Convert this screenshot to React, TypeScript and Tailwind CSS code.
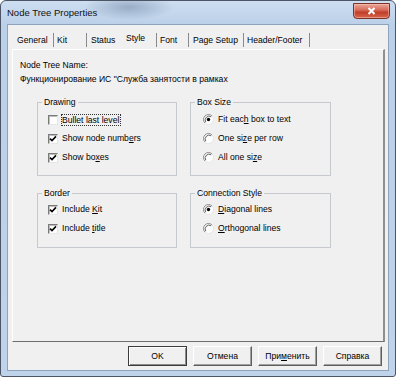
import React from "react";

function Check({ checked }: { checked: boolean }) {
  return (
    <span className="w-[10px] h-[10px] shrink-0 bg-white border border-t-[#7a7a7a] border-l-[#7a7a7a] border-b-[#e6e6e6] border-r-[#e6e6e6] shadow-[inset_1px_1px_0_#bdbdbd] flex items-center justify-center">
      {checked && (
        <svg width="8" height="8" viewBox="0 0 8 8">
          <path d="M1 3.6 L3 5.6 L7 1.4" stroke="#000" strokeWidth="1.6" fill="none" />
        </svg>
      )}
    </span>
  );
}

function Radio({ checked }: { checked: boolean }) {
  return (
    <svg width="11" height="11" viewBox="0 0 11 11" className="shrink-0">
      <circle cx="5.5" cy="5.5" r="5" fill="#fff" />
      <path d="M1.96 9.04 A5 5 0 0 1 9.04 1.96" stroke="#8a8a8a" fill="none" />
      <path d="M9.04 1.96 A5 5 0 0 1 1.96 9.04" stroke="#e4e4e4" fill="none" />
      <path d="M2.8 8.2 A3.9 3.9 0 0 1 8.2 2.8" stroke="#3a3a3a" strokeWidth="0.8" fill="none" />
      {checked && <circle cx="5.5" cy="5.5" r="1.7" fill="#000" />}
    </svg>
  );
}

function Tab({
  label,
  w,
  pl,
  sep = true,
  selected = false,
}: {
  label: string;
  w: string;
  pl: string;
  sep?: boolean;
  selected?: boolean;
}) {
  return (
    <div className={`flex items-start ${w}`}>
      <span className={`${pl} ${selected ? "pt-[7px]" : "pt-[9px]"} leading-[12px] whitespace-nowrap`}>{label}</span>
      {sep && <span className="ml-auto mt-[8px] w-px h-[14px] bg-[#8a8a8a] shrink-0" />}
    </div>
  );
}

export default function App() {
  return (
    <div className="w-[396px] h-[377px] overflow-hidden font-['Liberation_Sans',Arial,sans-serif] text-[8.6px] text-black">
      <div className="w-full h-full rounded-t-[6px] rounded-b-[3px] border border-[#4b5566] bg-[radial-gradient(ellipse_45px_13px_at_128px_6px,rgba(95,118,150,0.45),transparent),linear-gradient(180deg,#cddef0_0px,#bbd0e9_24px,#bfd3ea_100%)] flex flex-col">
        {/* title bar */}
        <div className="h-[23px] flex items-start shrink-0">
          <span className="ml-[6px] pt-[6px] text-[9.5px] leading-[12px] text-[#111]">Node Tree Properties</span>
          <div className="ml-auto mr-[5px] mt-[2px] w-[37px] h-[16px] rounded-b-[4px] border border-[#7b3328] bg-[linear-gradient(180deg,#e8a898_0%,#d9705f_40%,#c23f2a_60%,#d5674d_100%)] flex items-center justify-center shadow-[inset_0_0_0_1px_rgba(255,200,190,0.5)]">
            <svg width="9" height="8" viewBox="0 0 9 8">
              <path d="M1.5 1 L7.5 7 M7.5 1 L1.5 7" stroke="#fff" strokeWidth="2" />
            </svg>
          </div>
        </div>
        {/* client */}
        <div className="mx-[6px] mb-[5px] flex-1 bg-[#f0f0f0] border border-[#8ea3bd] flex flex-col">
          {/* tabs */}
          <div className="h-[24px] pl-[4px] flex shrink-0">
            <Tab label="General" w="w-[42px]" pl="pl-[5px]" />
            <Tab label="Kit" w="w-[33px]" pl="pl-[3px]" />
            <Tab label="Status" w="w-[33px]" pl="pl-[4px]" sep={false} />
            <Tab label="Style" w="w-[37px]" pl="pl-[6px]" selected />
            <Tab label="Font" w="w-[32px]" pl="pl-[3px]" />
            <Tab label="Page Setup" w="w-[55px]" pl="pl-[4px]" />
            <Tab label="Header/Footer" w="w-[66px]" pl="pl-[3px]" />
          </div>
          {/* panel */}
          <div className="ml-[4px] mr-[3px] h-[293px] shrink-0 border-t border-l border-t-white border-l-white border-r-2 border-r-[#8f8f8f] border-b border-b-[#6d6d6d] px-[7px] pt-[9px]">
            <div className="leading-[12px]">Node Tree Name:</div>
            <div className="leading-[12px] mt-[2px]">Функционирование ИС "Служба занятости в рамках</div>
            <div className="grid grid-cols-[140px_141px] gap-x-[13px] gap-y-[11px] ml-[17px] mt-[11px]">
              <fieldset className="h-[80px] border border-[#c6c9cd] p-0 m-0 min-w-0">
                <legend className="ml-[4px] px-[2px] leading-[12px]">Drawing</legend>
                <div className="pl-[10px] pt-[2px]">
                  <div className="h-[19px] flex items-center">
                    <Check checked={false} />
                    <span className="ml-[3px] border border-dotted border-[#333] leading-[10px] pr-[1px]">Bullet last level</span>
                  </div>
                  <div className="h-[19px] flex items-center">
                    <Check checked />
                    <span className="ml-[4px]">Show node numb<u>e</u>rs</span>
                  </div>
                  <div className="h-[19px] flex items-center">
                    <Check checked />
                    <span className="ml-[4px]">Show bo<u>x</u>es</span>
                  </div>
                </div>
              </fieldset>
              <fieldset className="h-[80px] border border-[#c6c9cd] p-0 m-0 min-w-0">
                <legend className="ml-[4px] px-[2px] leading-[12px]">Box Size</legend>
                <div className="pl-[12px] pt-[2px]">
                  <div className="h-[19px] flex items-center">
                    <Radio checked />
                    <span className="ml-[4px]">Fit eac<u>h</u> box to text</span>
                  </div>
                  <div className="h-[19px] flex items-center">
                    <Radio checked={false} />
                    <span className="ml-[4px]">One si<u>z</u>e per row</span>
                  </div>
                  <div className="h-[19px] flex items-center">
                    <Radio checked={false} />
                    <span className="ml-[4px]">All one si<u>z</u>e</span>
                  </div>
                </div>
              </fieldset>
              <fieldset className="h-[61px] border border-[#c6c9cd] p-0 m-0 min-w-0">
                <legend className="ml-[4px] px-[2px] leading-[12px]">Border</legend>
                <div className="pl-[10px] pt-[1px]">
                  <div className="h-[19px] flex items-center">
                    <Check checked />
                    <span className="ml-[4px]">Include <u>K</u>it</span>
                  </div>
                  <div className="h-[19px] flex items-center">
                    <Check checked />
                    <span className="ml-[4px]">Include <u>t</u>itle</span>
                  </div>
                </div>
              </fieldset>
              <fieldset className="h-[61px] border border-[#c6c9cd] p-0 m-0 min-w-0">
                <legend className="ml-[4px] px-[2px] leading-[12px]">Connection Style</legend>
                <div className="pl-[12px] pt-[1px]">
                  <div className="h-[19px] flex items-center">
                    <Radio checked />
                    <span className="ml-[4px]"><u>D</u>iagonal lines</span>
                  </div>
                  <div className="h-[19px] flex items-center">
                    <Radio checked={false} />
                    <span className="ml-[4px]"><u>O</u>rthogonal lines</span>
                  </div>
                </div>
              </fieldset>
            </div>
          </div>
          {/* buttons */}
          <div className="mt-[4px] mr-[6px] flex justify-end gap-[6px]">
            <button className="w-[59px] h-[20px] font-normal text-[8.6px] bg-[#f0f0f0] border border-[#3c3c3c] shadow-[inset_1px_1px_0_#fff,inset_-1px_-1px_0_#8a8a8a] leading-[12px]">OK</button>
            <button className="w-[59px] h-[20px] font-normal text-[8.6px] bg-[#f0f0f0] border border-t-white border-l-white border-r-[#5e5e5e] border-b-[#5e5e5e] shadow-[inset_-1px_-1px_0_#a0a0a0] leading-[12px]">Отмена</button>
            <button className="w-[59px] h-[20px] font-normal text-[8.6px] bg-[#f0f0f0] border border-t-white border-l-white border-r-[#5e5e5e] border-b-[#5e5e5e] shadow-[inset_-1px_-1px_0_#a0a0a0] leading-[12px]">При<u>м</u>енить</button>
            <button className="w-[59px] h-[20px] font-normal text-[8.6px] bg-[#f0f0f0] border border-t-white border-l-white border-r-[#5e5e5e] border-b-[#5e5e5e] shadow-[inset_-1px_-1px_0_#a0a0a0] leading-[12px]">Справка</button>
          </div>
        </div>
      </div>
    </div>
  );
}
